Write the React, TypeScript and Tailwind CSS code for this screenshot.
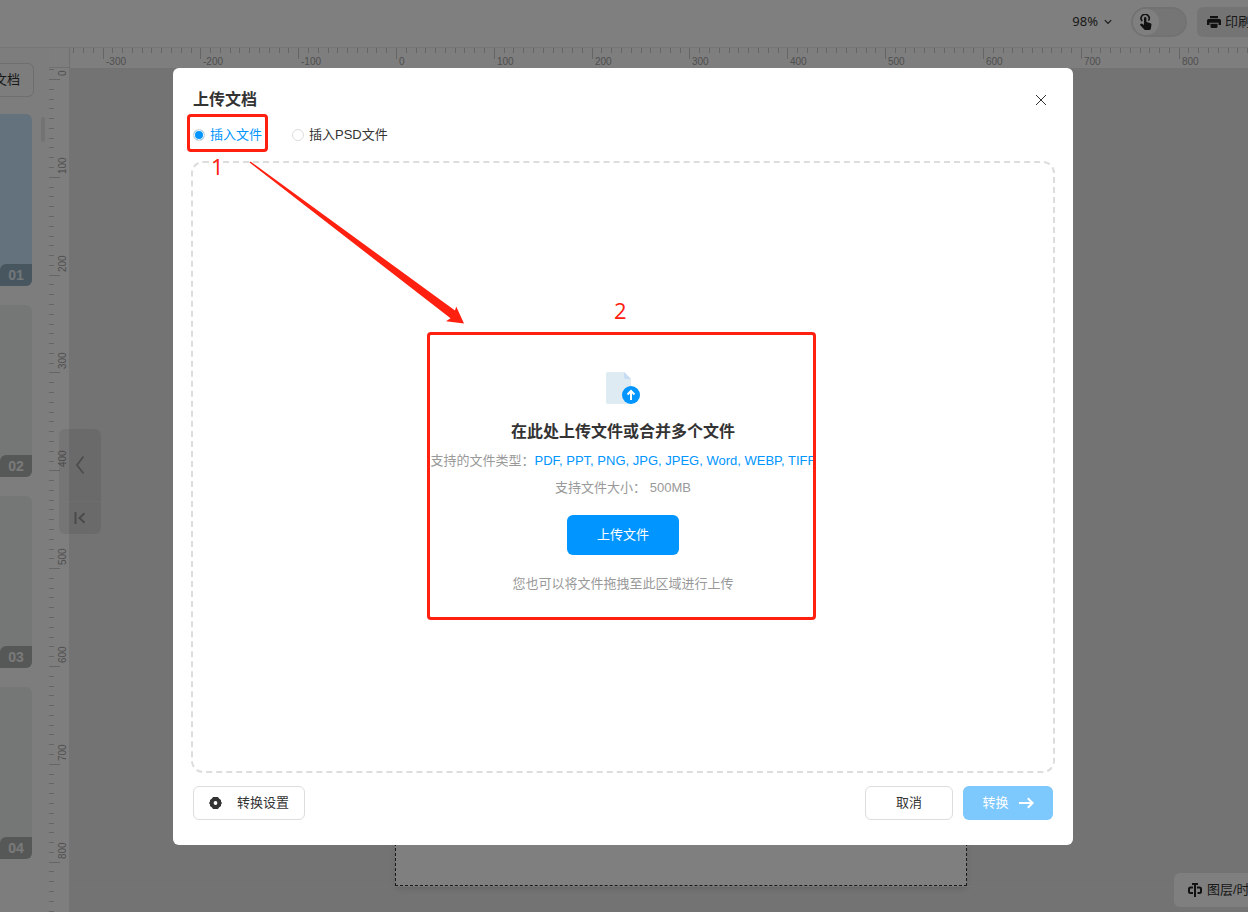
import { useState } from "react";

const STEP = 9.783;
const PAGES = ["01", "02", "03", "04"];
const FILE_TYPES = ["PDF", "PPT", "PNG", "JPG", "JPEG", "Word", "WEBP", "TIFF"];

const MODES = [
  { id: "file", label: "插入文件" },
  { id: "psd", label: "插入PSD文件" },
];

// tick numbers that fall inside a ruler of the given length
const ticksFor = (origin: number, length: number) => {
  const first = Math.ceil(-origin / STEP);
  const last = Math.floor((length - origin) / STEP);
  return Array.from({ length: last - first + 1 }, (_, i) => first + i);
};

function TopRuler() {
  return (
    <svg className="block h-5 w-full" shapeRendering="crispEdges">
      {ticksFor(326, window.innerWidth - 70).map((n) => {
        const x = Math.round(326 + n * STEP);
        const major = n % 10 === 0;
        return (
          <g key={n}>
            <rect x={x} y={0} width={1} height={major ? 11 : 5} fill="#cacaca" />
            {major && (
              <text x={x + 3} y={17} fontSize={10} fill="#a0a0a0">
                {n * 10}
              </text>
            )}
          </g>
        );
      })}
    </svg>
  );
}

function SideRuler() {
  return (
    <svg className="block h-full w-5" shapeRendering="crispEdges">
      {ticksFor(11, window.innerHeight - 68).map((n) => {
        const y = Math.round(11 + n * STEP);
        const major = n % 10 === 0;
        return (
          <g key={n}>
            <rect x={0} y={y} width={major ? 11 : 5} height={1} fill="#cacaca" />
            {major && (
              <text transform={`translate(17 ${y - 3}) rotate(-90)`} fontSize={10} fill="#a0a0a0">
                {n * 10}
              </text>
            )}
          </g>
        );
      })}
    </svg>
  );
}

function Header() {
  return (
    <header className="flex h-12 shrink-0 items-center justify-end border-b border-[#ededed] bg-white pb-1 text-[13px] text-[#333]">
      <button className="flex items-center gap-1.5 font-['Noto_Sans',sans-serif]">
        98%
        <svg width="8" height="8" viewBox="0 0 8 8" fill="none" stroke="#333" strokeWidth="1.2">
          <path d="M0.8 2.2 4 5.4 7.2 2.2" />
        </svg>
      </button>
      <button
        aria-label="手势"
        className="ml-[19px] flex h-[30px] w-14 items-center rounded-full border-2 border-[#e4e4e4] bg-[#ebebeb]"
      >
        <span className="flex size-[26px] items-center justify-center rounded-full bg-white">
          <svg width="12" height="16" viewBox="0 0 12 16" fill="#222">
            <path d="M2.200 7A4 4 0 1 1 8.400 6.600" fill="none" stroke="#222" strokeWidth="1.600" />
            <path d="M4 4.200q0-1.200 1.200-1.200t1.200 1.200V8l4.200 1.200q1 .4.900 1.400l-.6 3.900q-.2 1.500-1.600 1.500H5.600q-.8 0-1.300-.6L.3 11.200q-.5-.8.300-1.300 1-.6 1.900.1L4 11z" />
          </svg>
        </span>
      </button>
      <button className="ml-2.5 flex h-[30px] w-[51px] items-center gap-1 overflow-hidden rounded-l-md bg-[#e8e8e8] pl-2.5 whitespace-nowrap">
        <svg className="shrink-0" width="14" height="12" viewBox="0 0 14 12" fill="#222">
          <path d="M3 0h8v2.200H3zM1.500 3h11Q14 3 14 4.500V9h-2.500V6.800h-9V9H0V4.500Q0 3 1.500 3z" />
          <path d="M3.500 7.700h7V10.500q0 1.500-1.500 1.500H5q-1.500 0-1.500-1.500z" />
        </svg>
        <span className="shrink-0">印刷</span>
      </button>
    </header>
  );
}

function Sidebar() {
  return (
    <aside className="relative flex w-[49px] shrink-0 flex-col bg-[#fafafa] pt-[15px] pr-[17px]">
      <button className="-mr-0.5 flex h-[34px] items-center justify-end overflow-hidden rounded-r-md border border-l-0 border-[#dcdcdc] pr-[13px] text-[13px] whitespace-nowrap text-[#333]">
        <span className="shrink-0">文档</span>
      </button>
      <ul className="mt-[17px] flex flex-col gap-[19px]">
        {PAGES.map((page, i) => (
          <li
            key={page}
            className={`flex h-[172px] flex-col justify-end overflow-hidden rounded-r-md ${
              i === 0 ? "bg-[#c8e5fb]" : "bg-[#e9efed]"
            }`}
          >
            <span
              className={`h-[22px] rounded-tl-md text-center text-sm leading-[22px] font-bold ${
                i === 0 ? "bg-[#90adc0] text-[#e4eef4]" : "bg-[#acb0ae] text-[#f4f4f4]"
              }`}
            >
              {page}
            </span>
          </li>
        ))}
      </ul>
      <div className="absolute top-[69px] right-1 h-[25px] w-1 rounded-full bg-[#e6e6e6]" />
    </aside>
  );
}

function CollapsePanel() {
  return (
    <div className="absolute top-[361px] left-2.5 flex w-[42px] flex-col overflow-hidden rounded-md bg-black/7">
      <button aria-label="收起" className="flex h-[73px] items-center justify-center border-b border-white/20">
        <svg width="10" height="20" viewBox="0 0 10 20" fill="none" stroke="#999" strokeWidth="1.8">
          <path d="M8.500 1.500 2 10l6.500 8.500" />
        </svg>
      </button>
      <button aria-label="全部收起" className="flex h-8 items-center justify-center">
        <svg width="12" height="14" viewBox="0 0 12 14" fill="none" stroke="#949494" strokeWidth="2">
          <path d="M1.500 1v12M10.500 2.200 5.500 7l5 4.800" />
        </svg>
      </button>
    </div>
  );
}

function Workspace() {
  return (
    <div className="relative flex min-h-0 grow flex-col">
      <div className="flex shrink-0 bg-[#fcfcfc]">
        <div className="h-5 w-[21px] shrink-0 border-r border-b border-[#e0e0e0]" />
        <div className="min-w-0 grow">
          <TopRuler />
        </div>
      </div>
      <div className="relative flex min-h-0 grow">
        <div className="w-5 shrink-0 overflow-hidden bg-[#fcfcfc]">
          <SideRuler />
        </div>
        <main className="flex min-w-0 grow flex-col bg-[#e6e6e6]">
          <div className="ml-[326px] w-[572px] grow border border-dashed border-[#333] bg-white shadow-md" />
          <div className="h-[26px] shrink-0 border-t border-[#eaeaea]" />
        </main>
        <CollapsePanel />
      </div>
      <button className="absolute right-0 bottom-[5px] flex h-[34px] w-[74px] items-center gap-1 overflow-hidden rounded-l-md bg-white pl-[13px] text-[13px] whitespace-nowrap text-[#333]">
        <svg className="shrink-0" width="16" height="16" viewBox="0 0 16 16" fill="none" stroke="#222" strokeWidth="2">
          <path d="M8 2v13M5 2h6M6 5.500H3.500Q2 5.500 2 7v2.500Q2 11 3.500 11H6M10 5.500h2.500Q14 5.500 14 7v2.500Q14 11 12.500 11H10.500" />
        </svg>
        <span className="shrink-0">图层/时</span>
      </button>
    </div>
  );
}

function FileIcon() {
  return (
    <svg width="34" height="32" viewBox="0 0 34 32">
      <path d="M2 0h16l7 7v25H2q-2 0-2-2V2q0-2 2-2z" fill="#deebf3" />
      <path d="M18 0l7 7h-5q-2 0-2-2z" fill="#c5dcf2" />
      <circle cx="25" cy="23" r="9" fill="#0095ff" />
      <path d="M25 28v-8.500M21.500 22.500 25 19l3.500 3.500" fill="none" stroke="#fff" strokeWidth="2" />
    </svg>
  );
}

function UploadDialog() {
  const [mode, setMode] = useState("file");

  return (
    <section
      role="dialog"
      aria-labelledby="upload-title"
      className="relative flex w-[900px] max-w-full flex-col rounded-md bg-white px-5 pt-5 pb-[25px] text-[13px] leading-5 text-[#333]"
    >
      <div className="flex items-center justify-between">
        <h2 id="upload-title" className="text-base leading-6 font-bold">
          上传文档
        </h2>
        <button aria-label="关闭" className="flex size-6 items-center justify-center">
          <svg width="12" height="12" viewBox="0 0 12 12" stroke="#333" strokeWidth="1">
            <path d="M1 1l10 10M11 1 1 11" />
          </svg>
        </button>
      </div>

      <div className="mt-[13px] flex gap-[30px]">
        {MODES.map((m) => (
          <label key={m.id} className={`flex items-center gap-[5px] ${mode === m.id ? "text-[#0095ff]" : ""}`}>
            <input
              type="radio"
              name="mode"
              value={m.id}
              checked={mode === m.id}
              onChange={() => setMode(m.id)}
              className="size-3 appearance-none rounded-full border border-[#ddd] bg-white checked:bg-[#0095ff] checked:shadow-[inset_0_0_0_1px_#fff]"
            />
            {m.label}
          </label>
        ))}
      </div>

      <div className="-mx-0.5 mt-4 flex min-h-[612px] flex-col items-center justify-center rounded-xl border-2 border-dashed border-[#ddd] pt-8">
        <FileIcon />
        <h3 className="mt-4 text-base leading-6 font-bold">在此处上传文件或合并多个文件</h3>
        <p className="mt-[7px] text-[#999]">
          支持的文件类型：<span className="text-[#0095ff]">{FILE_TYPES.join(", ")}</span>
        </p>
        <p className="mt-[7px] text-[#999]">支持文件大小： 500MB</p>
        <button className="mt-[17px] h-10 w-28 rounded-md bg-[#0095ff] text-white">上传文件</button>
        <p className="mt-[19px] text-[#999]">您也可以将文件拖拽至此区域进行上传</p>
      </div>

      <div className="mt-[13px] flex items-center gap-2.5">
        <button className="mr-auto flex h-[34px] w-28 items-center justify-between rounded-md border border-[#ddd] px-[15px]">
          <svg width="13" height="12" viewBox="0 0 13 12">
            <path
              d="M4 0h5l1 1.500 2 1.500v1.500L13 6l-1 1.500V9l-2 1.500L9 12H4l-1-1.500L1 9V7.500L0 6l1-1.500V3l2-1.500z"
              fill="#333"
            />
            <circle cx="6.500" cy="6" r="1.900" fill="#fff" />
          </svg>
          转换设置
        </button>
        <button className="h-[34px] w-[88px] rounded-md border border-[#ddd]">取消</button>
        <button
          disabled
          className="flex h-[34px] w-[90px] items-center justify-center gap-2.5 rounded-md bg-[#7dc8fd] text-white"
        >
          转换
          <svg width="15" height="12" viewBox="0 0 15 12" fill="none" stroke="#fff" strokeWidth="2">
            <path d="M0 6h13.500M8.800 1.200 13.600 6l-4.800 4.800" />
          </svg>
        </button>
      </div>

      <Annotations />
    </section>
  );
}

// numbered tutorial marks drawn over the dialog
function Annotations() {
  return (
    <div className="pointer-events-none absolute inset-0 font-['Open_Sans','Noto_Sans',sans-serif] text-[22px] leading-6 text-[#ff2010]">
      <div className="absolute top-[46px] left-3.5 h-[38px] w-[81px] rounded-sm border-3 border-[#ff2010]" />
      <span className="absolute top-[86px] left-[38px]">1</span>
      <svg className="absolute top-[93px] left-[76px]" width="217" height="164" viewBox="0 0 217 164">
        <path d="M0.500 1.500 1.500 0.500 206 149.500l1.200-4L215 162.500l-18-2.200 4.500-3z" fill="#ff2010" />
      </svg>
      <span className="absolute top-[230px] left-[441px]">2</span>
      <div className="absolute top-[264px] left-[254px] h-72 w-[389px] rounded-sm border-3 border-[#ff2010]" />
    </div>
  );
}

export default function App() {
  return (
    <div className="flex h-screen flex-col overflow-hidden font-['Liberation_Sans','Noto_Sans_CJK_SC',sans-serif]">
      <Header />
      <div className="flex min-h-0 grow">
        <Sidebar />
        <Workspace />
      </div>
      <div className="fixed inset-0 flex items-center justify-center bg-black/50 pt-px pr-0.5">
        <UploadDialog />
      </div>
    </div>
  );
}
